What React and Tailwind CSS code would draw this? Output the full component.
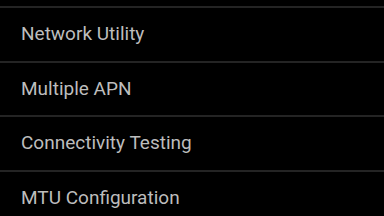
import React from "react";

const items = ["Network Utility", "Multiple APN", "Connectivity Testing", "MTU Configuration"];

export default function App() {
  return (
    <div className="w-[384px] h-[216px] overflow-hidden bg-black pt-[6px]" style={{ fontFamily: "Roboto, sans-serif" }}>
      {items.map((label) => (
        <div key={label} className="flex flex-col">
          <div className="h-[2px] bg-[#242424]" />
          <div className="h-[52.5px] flex items-center pl-[21px] text-[19px] text-[#bdbdbd]">
            {label}
          </div>
        </div>
      ))}
    </div>
  );
}
